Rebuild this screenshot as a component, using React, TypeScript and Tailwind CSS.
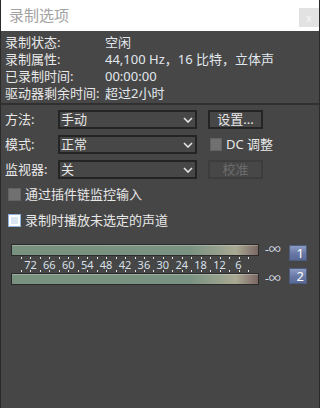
import React from "react";

const font = "font-['Noto_Sans','Noto_Sans_CJK_SC',sans-serif]";

const Chevron: React.FC = () => (
  <svg width="10" height="6" viewBox="0 0 10 6" className="shrink-0">
    <polyline points="1,1 5,5 9,1" fill="none" stroke="#e4e4e4" strokeWidth="1.6" />
  </svg>
);

const Select: React.FC<{ value: string }> = ({ value }) => (
  <div className="w-[139px] h-[19px] border-2 border-[#242424] bg-[#474747] flex items-center justify-between pl-[1px] pr-[2px]">
    <span className="text-[13px] leading-none text-[#e6e6e6]">{value}</span>
    <Chevron />
  </div>
);

const Meter: React.FC<{ n: string; btn: string }> = ({ n, btn }) => (
  <div className="flex items-start h-[12px]">
    <div className="ml-[10px] w-[248px] h-[12px] border border-[#2b2b2b] bg-[linear-gradient(to_right,#79917f_0%,#7a9281_72%,#95a08c_84%,#aaa992_91%,#8b7c74_97%,#7a6763_100%)] shadow-[inset_0_1px_0_rgba(255,255,255,0.25)]" />
    <span className="ml-[6px] w-[21px] h-[12px] flex items-center text-[12px] leading-none text-[#d6dde6]">-∞</span>
    <div
      className={`ml-[3px] w-[18px] h-[16px] shrink-0 border border-[#4d5b80] bg-[linear-gradient(to_bottom,#8d9cc3,#6878a4_55%,#5a6a96)] flex items-center justify-end pr-[2px] text-[13px] leading-none text-white ${btn}`}
    >
      {n}
    </div>
  </div>
);

const App: React.FC = () => {
  const info = [
    ["录制状态:", "空闲"],
    ["录制属性:", "44,100 Hz，16 比特，立体声"],
    ["已录制时间:", "00:00:00"],
    ["驱动器剩余时间:", "超过2小时"],
  ];
  const scale = ["72", "66", "60", "54", "48", "42", "36", "30", "24", "18", "12", "6"];
  const ticks = Array.from({ length: 25 }, (_, i) => 20 + i * 9.46);

  return (
    <div className={`w-[320px] h-[408px] bg-[#464646] border-x border-[#2a2a2a] flex flex-col ${font}`}>
      {/* title bar */}
      <div className="h-[31px] shrink-0 bg-white flex items-start justify-between pl-[8px]">
        <span className="mt-[6px] text-[15px] leading-[18px] text-[#a2a2a2]">录制选项</span>
        <div className="mt-[8px] w-[20px] h-[19px] bg-[#e2e2e2] flex items-center justify-center text-[10px] leading-none text-[#f8f8f8]">
          x
        </div>
      </div>

      {/* status info */}
      <div className="h-[74px] shrink-0 pt-[3px] pl-[4px] border-b-2 border-[#303030] bg-[#474747]">
        {info.map(([k, v]) => (
          <div key={k} className="flex h-[17px] items-center text-[13px] leading-none">
            <span className="w-[100px] text-[#e8e8e8]">{k}</span>
            <span className="text-[#e2e7ee]">{v}</span>
          </div>
        ))}
      </div>

      {/* controls */}
      <div className="pl-[4px] pt-[5px] flex flex-col gap-[6px]">
        <div className="flex items-center">
          <span className="w-[53px] text-[13px] leading-none text-[#e8e8e8]">方法:</span>
          <Select value="手动" />
          <div className="ml-[11px] w-[55px] h-[19px] border-2 border-[#242424] bg-[#474747] flex items-center justify-center text-[13px] leading-none text-[#e8e8e8]">
            设置...
          </div>
        </div>
        <div className="flex items-center">
          <span className="w-[53px] text-[13px] leading-none text-[#e8e8e8]">模式:</span>
          <Select value="正常" />
          <div className="ml-[13px] w-[12px] h-[13px] bg-[#707070] border border-[#626262]" />
          <span className="ml-[4px] text-[13px] leading-none text-[#e8e8e8]">DC 调整</span>
        </div>
        <div className="flex items-center">
          <span className="w-[53px] text-[13px] leading-none text-[#e8e8e8]">监视器:</span>
          <Select value="关" />
          <div className="ml-[11px] w-[55px] h-[19px] border-2 border-[#3d3d3d] bg-[#474747] flex items-center justify-center text-[13px] leading-none text-[#6c6c6c]">
            校准
          </div>
        </div>
      </div>

      <div className="pl-[7px] mt-[9px] flex flex-col gap-[13px]">
        <div className="flex items-center h-[13px]">
          <div className="w-[13px] h-[13px] bg-[#707070] border border-[#626262]" />
          <span className="ml-[4px] text-[13px] leading-none text-[#e8e8e8]">通过插件链监控输入</span>
        </div>
        <div className="flex items-center h-[13px]">
          <div className="w-[13px] h-[13px] border border-[#8fb1dc] bg-white p-[2px]">
            <div className="w-full h-full bg-[#dbe6f3]" />
          </div>
          <span className="ml-[4px] text-[13px] leading-none text-[#e8e8e8]">录制时播放未选定的声道</span>
        </div>
      </div>

      {/* meters */}
      <div className="mt-[17px] flex flex-col">
        <Meter n="1" btn="mt-[1px]" />
        <div className="relative h-[17px]">
          <svg className="absolute left-0 top-0" width="270" height="17">
            {ticks.map((x) => (
              <g key={x} fill="#e4e4e4">
                <rect x={Math.round(x)} y="1" width="1" height="2" />
                <rect x={Math.round(x)} y="14" width="1" height="2" />
              </g>
            ))}
          </svg>
          <div className="absolute left-[20px] top-0 h-[17px] flex items-center">
            {scale.map((s) => (
              <span key={s} className="w-[18.92px] text-center text-[11px] leading-none text-[#d8e0ea]">
                {s}
              </span>
            ))}
          </div>
        </div>
        <Meter n="2" btn="-mt-[5px]" />
      </div>
    </div>
  );
};

export default App;
